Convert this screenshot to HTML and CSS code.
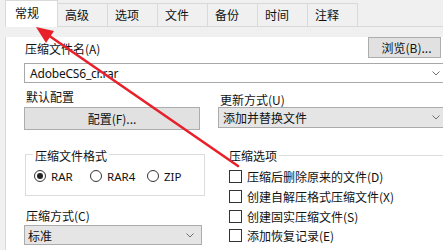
FILE: index.html
```html
<!DOCTYPE html>
<html lang="zh-CN">
<head>
<meta charset="utf-8">
<title>压缩文件名和参数</title>
<link rel="stylesheet" href="styles.css">
</head>
<body>
<div class="dlg">
  <div class="tabs">
    <div class="tab active">常规</div>
    <div class="tab">高级</div>
    <div class="tab">选项</div>
    <div class="tab">文件</div>
    <div class="tab">备份</div>
    <div class="tab">时间</div>
    <div class="tab">注释</div>
  </div>
  <div class="panel">
    <div class="row1">
      <span class="lbl name-lbl">压缩文件名(A)</span>
      <div class="btn browse">浏览(B)...</div>
    </div>
    <div class="combo edit cut">
      <span class="val">AdobeCS6_cr.rar</span>
      <svg class="chev" width="8" height="5" viewBox="0 0 8 5"><path d="M0.5 0.5 L4 4 L7.5 0.5" fill="none" stroke="#707070" stroke-width="1"/></svg>
    </div>
    <div class="cols top">
      <div class="col left">
        <div class="lbl">默认配置</div>
        <div class="btn profile">配置(F)...</div>
      </div>
      <div class="col right">
        <div class="lbl upd-lbl">更新方式(U)</div>
        <div class="combo gray upd cut">
          <span class="val">添加并替换文件</span>
          <svg class="chev" width="8" height="5" viewBox="0 0 8 5"><path d="M0.5 0.5 L4 4 L7.5 0.5" fill="none" stroke="#707070" stroke-width="1"/></svg>
        </div>
      </div>
    </div>
    <div class="cols bottom">
      <div class="col left">
        <div class="group">
          <div class="legend">压缩文件格式</div>
          <div class="radios">
            <label class="radio r1"><span class="circle checked"></span>RAR</label>
            <label class="radio r2"><span class="circle"></span>RAR4</label>
            <label class="radio r3"><span class="circle"></span>ZIP</label>
          </div>
        </div>
        <div class="lbl method-lbl">压缩方式(C)</div>
        <div class="combo gray method">
          <span class="val">标准</span>
          <svg class="chev" width="8" height="5" viewBox="0 0 8 5"><path d="M0.5 0.5 L4 4 L7.5 0.5" fill="none" stroke="#707070" stroke-width="1"/></svg>
        </div>
      </div>
      <div class="col right">
        <div class="optlegend"><span>压缩选项</span></div>
        <div class="checks">
          <div class="check"><span class="box"></span>压缩后删除原来的文件(D)</div>
          <div class="check"><span class="box"></span>创建自解压格式压缩文件(X)</div>
          <div class="check"><span class="box"></span>创建固实压缩文件(S)</div>
          <div class="check"><span class="box"></span>添加恢复记录(E)</div>
        </div>
      </div>
    </div>
  </div>
  <svg class="arrow" width="443" height="250" viewBox="0 0 443 250">
    <line x1="238" y1="166" x2="48" y2="35" stroke="#e8202a" stroke-width="2.6" stroke-linecap="round"/>
    <polygon points="36,27 54,31 46,43" fill="#e8202a"/>
  </svg>
</div>
</body>
</html>
```
FILE: styles.css
```css
* { box-sizing: border-box; }

html, body {
  margin: 0;
  padding: 0;
}

body {
  width: 443px;
  height: 250px;
  overflow: hidden;
  background: #f0f0f0;
  font-family: "Noto Sans CJK SC", "Microsoft YaHei", sans-serif;
  font-size: 12px;
  color: #111;
}

.dlg {
  position: relative;
  width: 443px;
  height: 250px;
  padding-left: 5px;
  overflow: hidden;
}

/* Tabs */
.tabs {
  display: flex;
  align-items: flex-end;
  height: 27px;
  border-bottom: 1px solid #d9d9d9;
}

.tab {
  width: 50px;
  height: 23px;
  padding-left: 7px;
  padding-top: 1px;
  line-height: 20px;
  background: #f0f0f0;
  border: 1px solid #d9d9d9;
  border-left: none;
  border-bottom: none;
  white-space: nowrap;
}

.tab.active {
  position: relative;
  z-index: 1;
  width: 53px;
  height: 27px;
  margin-bottom: -1px;
  padding-left: 9px;
  padding-top: 1px;
  line-height: 22px;
  background: #fff;
  border-left: 1px solid #d9d9d9;
}

/* Panel */
.panel {
  height: 223px;
  background: #fff;
  border-left: 1px solid #d9d9d9;
  padding-left: 18px;
}

.lbl {
  line-height: 14px;
  white-space: nowrap;
}

.row1 {
  display: flex;
  justify-content: space-between;
  align-items: center;
  height: 21px;
  margin-top: 10px;
}

.name-lbl {
  padding-top: 3px;
  padding-left: 1px;
}

.btn {
  background: #e1e1e1;
  border: 1px solid #adadad;
  text-align: center;
  white-space: nowrap;
}

.browse {
  width: 73px;
  height: 21px;
  line-height: 19px;
  margin-right: 2px;
  padding-left: 4px;
}

.combo {
  display: flex;
  align-items: center;
  justify-content: space-between;
  border: 1px solid #acacac;
  padding-left: 4px;
  padding-right: 7px;
  white-space: nowrap;
}

.combo.cut {
  border-right: none;
  padding-right: 3px;
}

.combo .chev {
  flex: none;
}

.edit {
  height: 20px;
  margin-top: 5px;
  background: #fff;
  border-color: #a8a8a8;
  padding-left: 5px;
  font-family: "Noto Sans", "Noto Sans CJK SC", sans-serif;
  letter-spacing: -0.2px;
}

.gray {
  background: #e5e5e5;
}

.cols {
  display: flex;
}

.col.left {
  width: 178px;
  flex: none;
}

.col.right {
  flex: 1;
  margin-left: 16px;
}

.cols.top {
  margin-top: 7px;
}

.cols.top .left .lbl {
  padding-left: 2px;
}

.profile {
  width: 176px;
  height: 23px;
  line-height: 21px;
  margin-top: 3px;
}

.upd-lbl {
  margin-top: 3px;
  padding-left: 2px;
}

.upd {
  height: 21px;
}

/* Format group */
.group {
  margin-top: 24px;
  margin-left: 1px;
  width: 180px;
  border: 1px solid #dcdcdc;
  padding-bottom: 11px;
}

.legend {
  width: max-content;
  margin: -6px 0 0 7px;
  padding: 0 2px;
  line-height: 14px;
  background: #fff;
}

.radios {
  display: flex;
  align-items: center;
  height: 16px;
  margin-top: 5px;
  padding-left: 8px;
}

.radio {
  display: flex;
  align-items: center;
  gap: 5px;
  font-family: "Noto Sans", "Noto Sans CJK SC", sans-serif;
  font-size: 11.5px;
  white-space: nowrap;
}

.r1 { width: 56px; }
.r2 { width: 57px; }

.circle {
  position: relative;
  width: 12px;
  height: 12px;
  border: 1px solid #333;
  border-radius: 50%;
  background: #fff;
  flex: none;
}

.circle.checked::after {
  content: "";
  position: absolute;
  left: 2px;
  top: 2px;
  width: 6px;
  height: 6px;
  border-radius: 50%;
  background: #222;
}

.method-lbl {
  margin-top: 13px;
  padding-left: 2px;
}

.method {
  width: 178px;
  height: 20px;
  margin-top: 2px;
  padding-left: 3px;
}

/* Options group */
.optlegend {
  display: flex;
  align-items: center;
  margin-top: 19px;
  padding-left: 11px;
  line-height: 14px;
  white-space: nowrap;
}

.optlegend::after {
  content: "";
  flex: 1;
  height: 1px;
  margin-left: 2px;
  margin-top: -1px;
  background: #dcdcdc;
}

.checks {
  margin-top: 4px;
  padding-left: 11px;
}

.check {
  display: flex;
  align-items: center;
  gap: 5px;
  height: 19.7px;
  white-space: nowrap;
}

.box {
  width: 13px;
  height: 13px;
  border: 1px solid #333;
  background: #fff;
  flex: none;
}

/* Overlay arrow */
.arrow {
  position: absolute;
  left: 0;
  top: 0;
  z-index: 5;
  pointer-events: none;
}
```
